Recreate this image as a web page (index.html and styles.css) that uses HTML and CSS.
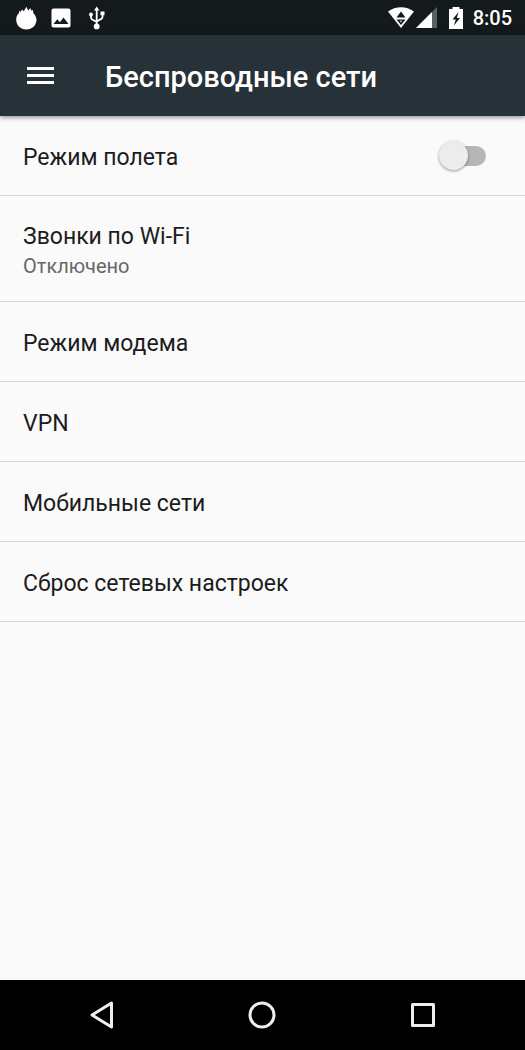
FILE: index.html
```html
<!DOCTYPE html>
<html lang="ru">
<head>
<meta charset="utf-8">
<meta name="viewport" content="width=device-width, initial-scale=1">
<title>Беспроводные сети</title>
<link rel="stylesheet" href="styles.css">
</head>
<body>
<div class="screen">
  <div class="status-bar">
    <div class="status-notifications">
      <svg class="status-icon" viewBox="0 0 24 24" aria-hidden="true"><path fill="#fff" d="M5 4.500L6.500 6 8 3.500l1.800 1.700L12.300.8l2 3.700L16.300 2l1 2.500 1.700-.5.300 3A10.300 10.300 0 0 1 22.500 13.500C22.500 19.300 18.200 23.500 12.300 23.500S2.200 19.300 2.200 13.500C2.200 10.500 3.300 8.500 5 7z"/></svg>
      <svg class="status-icon" viewBox="0 0 24 24" aria-hidden="true"><path fill="#fff" fill-rule="evenodd" d="M4.500 2.500h15a2 2 0 0 1 2 2v15a2 2 0 0 1-2 2h-15a2 2 0 0 1-2-2v-15a2 2 0 0 1 2-2zM4.500 18h15l-5-6.500-3.700 4.700-2.500-3z"/></svg>
      <svg class="status-icon" viewBox="0 0 24 24" aria-hidden="true"><path fill="none" stroke="#fff" stroke-width="1.800" stroke-linejoin="round" d="M12.700 3v17M7 9v2.500q0 1.300 1.200 2l4.500 2.500M18.500 8v3q0 1.200-1.200 1.900L12.700 15.500"/><path fill="#fff" d="M12.700.6L15.400 4.500H10zM16.500 5.500h4v3.700h-4z"/><circle fill="#fff" cx="7" cy="8.500" r="2"/><circle fill="#fff" cx="12.700" cy="20.400" r="2.900"/></svg>
    </div>
    <div class="status-system">
      <svg class="wifi-icon" viewBox="0 0 26 22" aria-hidden="true"><path fill="#fff" d="M0 4.500C7.500-1.300 18.500-1.300 26 4.500L13 21z"/><path fill="#14191c" d="M13 4.500l4.500 6h-9zM8.500 12.500h9L13 18z"/><path fill="#fff" d="M11.800 13.800h2.400L13 15.400z"/></svg>
      <svg class="signal-icon" viewBox="0 0 22 22" aria-hidden="true"><path fill="#596064" d="M21 0v21H0z"/><path fill="#fff" d="M16 5v16H0z"/></svg>
      <svg class="battery-icon" viewBox="0 0 16 22" aria-hidden="true"><path fill="#fff" d="M4.500 0h7v2H15v20H1V2h3.500z"/><path fill="#14191c" d="M10.500 5l-6 7.500h3.200L6 18.500l6-7.500H8.800z"/></svg>
      <time class="clock">8:05</time>
    </div>
  </div>
  <header class="app-bar">
    <button class="menu-button" type="button" aria-label="Меню">
      <svg class="menu-icon" viewBox="0 0 28 20" aria-hidden="true"><path fill="#fff" d="M0 1h27v3H0zM0 8h27v3H0zM0 15h27v3H0z"/></svg>
    </button>
    <h1 class="app-title">Беспроводные сети</h1>
  </header>
  <main class="settings">
    <label class="row" for="airplane">
      <span class="row-title">Режим полета</span>
      <input class="switch" id="airplane" type="checkbox" role="switch">
    </label>
    <button class="row row-double" type="button">
      <span class="row-title">Звонки по Wi-Fi</span>
      <span class="row-summary">Отключено</span>
    </button>
    <button class="row" type="button"><span class="row-title">Режим модема</span></button>
    <button class="row" type="button"><span class="row-title">VPN</span></button>
    <button class="row" type="button"><span class="row-title">Мобильные сети</span></button>
    <button class="row" type="button"><span class="row-title">Сброс сетевых настроек</span></button>
  </main>
  <nav class="nav-bar">
    <button class="nav-button" type="button" aria-label="Назад"><svg class="nav-icon" viewBox="0 0 32 32" aria-hidden="true"><path d="M25.500 4v24L6 16z"/></svg></button>
    <button class="nav-button" type="button" aria-label="Домой"><svg class="nav-icon" viewBox="0 0 32 32" aria-hidden="true"><circle cx="16" cy="16" r="12"/></svg></button>
    <button class="nav-button" type="button" aria-label="Обзор"><svg class="nav-icon" viewBox="0 0 32 32" aria-hidden="true"><path d="M5.500 5.500h21v21h-21z"/></svg></button>
  </nav>
</div>
</body>
</html>
```

FILE: styles.css
```css
* {
  box-sizing: border-box;
}

body {
  margin: 0;
  background: #fafafa;
  font-family: Roboto, "Noto Sans", sans-serif;
  color: #1c1c1c;
}

button {
  border: 0;
  padding: 0;
  background: none;
  font: inherit;
  color: inherit;
}

svg {
  display: block;
}

.screen {
  display: flex;
  flex-direction: column;
  min-height: 100vh;
}

.status-bar {
  display: flex;
  align-items: center;
  justify-content: space-between;
  height: 35px;
  padding: 0 13px 0 14px;
  background: #14191c;
  color: #fff;
}

.status-notifications {
  display: flex;
  gap: 11px;
}

.status-icon {
  width: 24px;
  height: 24px;
}

.status-system {
  display: flex;
  align-items: center;
}

.wifi-icon {
  width: 26px;
  height: 22px;
}

.signal-icon {
  width: 22px;
  height: 22px;
  margin-left: 2px;
}

.battery-icon {
  width: 16px;
  height: 22px;
  margin: 0 9px 0 10px;
}

.clock {
  font-size: 20px;
  font-weight: 500;
  line-height: 24px;
}

.app-bar {
  display: flex;
  align-items: center;
  gap: 50px;
  height: 81px;
  padding: 0 27px;
  background: #263238;
  color: #fff;
  box-shadow: 0 1px 5px rgba(0, 0, 0, 0.5);
}

.menu-icon {
  width: 28px;
  height: 20px;
}

.app-title {
  margin: 0;
  padding-top: 2px;
  font-size: 29px;
  font-weight: 500;
  line-height: 36px;
}

.settings {
  flex: 1;
}

.row {
  display: flex;
  align-items: center;
  justify-content: space-between;
  width: 100%;
  min-height: 80px;
  padding: 4px 39px 0 23px;
  border-bottom: 1px solid #d6d6d6;
  text-align: left;
}

.row-double {
  flex-direction: column;
  align-items: flex-start;
  justify-content: center;
  min-height: 106px;
}

.row-title {
  font-size: 23px;
  line-height: 30px;
}

.row-summary {
  font-size: 20px;
  line-height: 28px;
  color: #666;
}

.switch {
  display: flex;
  align-items: center;
  appearance: none;
  width: 42px;
  height: 20px;
  margin: 0 0 4px;
  border-radius: 10px;
  background: #b6b6b6;
}

.switch::before {
  content: "";
  width: 29px;
  height: 29px;
  margin-left: -5px;
  border-radius: 50%;
  background: #ececec;
  box-shadow: 0 1px 3px rgba(0, 0, 0, 0.4);
}

.switch:checked {
  justify-content: flex-end;
}

.nav-bar {
  display: flex;
  height: 70px;
  padding: 0 22px;
  background: #000;
}

.nav-button {
  display: flex;
  flex: 1;
  align-items: center;
  justify-content: center;
}

.nav-icon {
  width: 32px;
  height: 32px;
  fill: none;
  stroke: #eee;
  stroke-width: 3;
  stroke-linejoin: round;
}
```
